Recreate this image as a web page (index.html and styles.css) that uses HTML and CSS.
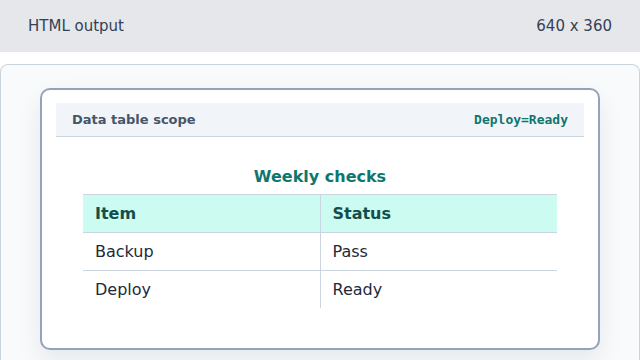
FILE: index.html
```html
<!DOCTYPE html>
<html lang="en">
<head>
<meta charset="utf-8">
<title>HTML output</title>
<link rel="stylesheet" href="styles.css">
</head>
<body>
<header class="topbar">
  <span class="topbar-title">HTML output</span>
  <span class="topbar-size">640 x 360</span>
</header>
<main class="stage">
  <section class="panel">
    <div class="card">
      <div class="card-head">
        <span class="card-title">Data table scope</span>
        <code class="card-state">Deploy=Ready</code>
      </div>
      <div class="card-body">
        <table class="checks">
          <caption>Weekly checks</caption>
          <thead>
            <tr><th scope="col">Item</th><th scope="col">Status</th></tr>
          </thead>
          <tbody>
            <tr><td>Backup</td><td>Pass</td></tr>
            <tr><td>Deploy</td><td>Ready</td></tr>
          </tbody>
        </table>
      </div>
    </div>
  </section>
</main>
</body>
</html>
```
FILE: styles.css
```css
* { box-sizing: border-box; }
html, body { margin: 0; padding: 0; background: #ffffff; }
body {
  font-family: "DejaVu Sans", sans-serif;
  width: 640px;
  height: 360px;
  overflow: hidden;
  display: flex;
  flex-direction: column;
}
.topbar {
  flex: 0 0 52px;
  background: #e5e7eb;
  display: flex;
  align-items: center;
  justify-content: space-between;
  padding: 0 28px;
  font-size: 15px;
  color: #334155;
}
.stage {
  flex: 1 1 auto;
  display: flex;
  flex-direction: column;
  padding-top: 12px;
  min-height: 0;
}
.panel {
  flex: 1 1 auto;
  background: #f8fafc;
  border: 1px solid #cbd5e1;
  border-bottom: none;
  border-radius: 8px 8px 0 0;
  padding: 23px 39px 0;
}
.card {
  background: #ffffff;
  border: 2px solid #94a3b8;
  border-radius: 10px;
  padding: 13px 14px 16px;
  box-shadow: 0 10px 24px rgba(15, 23, 42, 0.08);
}
.card-head {
  display: flex;
  align-items: center;
  justify-content: space-between;
  background: #f1f5f9;
  border-bottom: 1px solid #cbd5e1;
  height: 34px;
  padding: 0 16px;
}
.card-title {
  font-size: 13px;
  font-weight: bold;
  color: #475569;
}
.card-state {
  font-family: "DejaVu Sans Mono", monospace;
  font-size: 13px;
  font-weight: bold;
  color: #0f766e;
}
.card-body {
  padding-top: 30px;
}
.checks {
  width: 474px;
  margin: 0 auto 24px;
  border-collapse: collapse;
  font-size: 16px;
  color: #1e293b;
  table-layout: fixed;
}
.checks caption {
  font-weight: bold;
  color: #0f766e;
  padding-bottom: 8px;
  line-height: 19px;
}
.checks th, .checks td {
  text-align: left;
  padding: 9px 12px;
  line-height: 19px;
}
.checks th {
  background: #ccfbf1;
  color: #134e4a;
  font-weight: bold;
  border-top: 1px solid #cbd5e1;
  border-bottom: 1px solid #cbd5e1;
}
.checks tbody tr:not(:last-child) td {
  border-bottom: 1px solid #cbd5e1;
}
.checks th + th, .checks td + td {
  border-left: 1px solid #cbd5e1;
}
```
